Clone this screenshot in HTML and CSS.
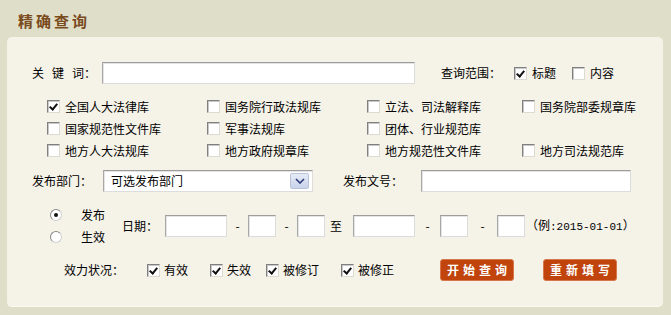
FILE: index.html
```html
<!DOCTYPE html>
<html lang="zh-CN">
<head>
    <meta charset="UTF-8">
    <title>精确查询</title>
    <link rel="stylesheet" href="styles.css">
</head>
<body>
    <h1 class="title">精确查询</h1>
    <div class="panel">
        <div class="row row-key">
            <span class="label key-label"><span class="sp">关</span><span class="sp">键</span>词：</span>
            <span class="field key-input"></span>
            <span class="range-label">查询范围：</span>
            <span class="box on"></span><span class="opt">标题</span>
            <span class="box gap-l"></span><span class="opt">内容</span>
        </div>

        <div class="libs">
            <div class="lib-row">
                <span class="lib"><span class="box on"></span>全国人大法律库</span>
                <span class="lib"><span class="box"></span>国务院行政法规库</span>
                <span class="lib lib-3"><span class="box"></span>立法、司法解释库</span>
                <span class="lib lib-4"><span class="box"></span>国务院部委规章库</span>
            </div>
            <div class="lib-row">
                <span class="lib"><span class="box"></span>国家规范性文件库</span>
                <span class="lib"><span class="box"></span>军事法规库</span>
                <span class="lib lib-3"><span class="box"></span>团体、行业规范库</span>
            </div>
            <div class="lib-row tall">
                <span class="lib"><span class="box"></span>地方人大法规库</span>
                <span class="lib"><span class="box"></span>地方政府规章库</span>
                <span class="lib lib-3"><span class="box"></span>地方规范性文件库</span>
                <span class="lib lib-4"><span class="box"></span>地方司法规范库</span>
            </div>
        </div>

        <div class="row row-dept">
            <span class="label dept-label">发布部门：</span>
            <span class="field select">
                <span class="select-text">可选发布部门</span>
                <span class="select-btn">
                    <svg width="10" height="6" viewBox="0 0 10 6"><polyline points="1,1 5,5 9,1" fill="none" stroke="#2b3b78" stroke-width="1.6"/></svg>
                </span>
            </span>
            <span class="label doc-label">发布文号：</span>
            <span class="field doc-input"></span>
        </div>

        <div class="row row-date">
            <div class="radios">
                <div class="radio-item"><span class="radio on"></span>发布</div>
                <div class="radio-item"><span class="radio"></span>生效</div>
            </div>
            <span class="date-label">日期：</span>
            <span class="field d-year"></span><span class="dash">-</span>
            <span class="field d-small"></span><span class="dash">-</span>
            <span class="field d-small"></span>
            <span class="to">至</span>
            <span class="field d-year"></span><span class="dash dash-w1">-</span>
            <span class="field d-small"></span><span class="dash dash-w2">-</span>
            <span class="field d-small"></span>
            <span class="hint">（例<span class="num">:2015-01-01</span>）</span>
        </div>

        <div class="row row-status">
            <span class="status-label">效力状况：</span>
            <span class="box on"></span><span class="st st-1">有效</span>
            <span class="box on"></span><span class="st st-2">失效</span>
            <span class="box on"></span><span class="st st-3">被修订</span>
            <span class="box on"></span><span class="st">被修正</span>
            <span class="btn btn-search">开始查询</span>
            <span class="btn btn-reset">重新填写</span>
        </div>
    </div>
</body>
</html>
```

FILE: styles.css
```css
body {
    margin: 0;
    padding: 0;
    background-color: #dfdec8;
    font-family: "Noto Sans CJK SC", "Liberation Sans", sans-serif;
    font-size: 12px;
    color: #000;
}

.title {
    margin: 0;
    height: 37px;
    box-sizing: border-box;
    padding: 12px 0 0 18px;
    font-size: 15px;
    line-height: 18px;
    font-weight: bold;
    letter-spacing: 3px;
    color: #7a4b1d;
}

.panel {
    margin: 0 8px 0 7px;
    height: 270px;
    box-sizing: border-box;
    padding-left: 25px;
    padding-top: 1px;
    background-color: #f5f2e8;
    border-radius: 5px;
    border-bottom: 1px solid #fbfaf4;
}

.row {
    display: flex;
    align-items: center;
    height: 22px;
    line-height: 16px;
    white-space: nowrap;
}

.row > * {
    flex: none;
}

.field {
    display: inline-block;
    height: 22px;
    box-sizing: border-box;
    background-color: #fff;
    border: 1px solid #dcdcdc;
    border-top-color: #9c9c9c;
    border-left-color: #a8a8a8;
    box-shadow: inset 1px 1px 0 #e4e4e4;
}

/* checkbox */
.box {
    display: inline-block;
    width: 13px;
    height: 13px;
    box-sizing: border-box;
    background-color: #fff;
    border: 1px solid #dcdad2;
    border-top-color: #808080;
    border-left-color: #808080;
    box-shadow: inset 1px 1px 0 #c8c8c8;
    position: relative;
    flex: none;
}

.box.on::after {
    content: "";
    position: absolute;
    left: 3px;
    top: 1px;
    width: 3px;
    height: 6px;
    border-right: 2px solid #111;
    border-bottom: 2px solid #111;
    transform: rotate(40deg);
}

/* row 1 */
.row-key {
    margin-top: 24px;
}

.key-label {
    width: 70px;
}

.sp {
    margin-right: 8px;
}

.key-input {
    width: 313px;
}

.range-label {
    margin-left: 26px;
    width: 73px;
}

.opt {
    margin-left: 5px;
}

.gap-l {
    margin-left: 16px;
}

/* libraries */
.libs {
    margin-top: 11px;
    padding-left: 15px;
}

.lib-row {
    display: flex;
    align-items: center;
    height: 22px;
    white-space: nowrap;
}

.lib-row.tall {
    height: 23px;
}

.lib {
    display: flex;
    align-items: center;
    gap: 5px;
    width: 160px;
    flex: none;
}

.lib-3 {
    width: 155px;
}

/* department */
.row-dept {
    margin-top: 8px;
}

.dept-label {
    width: 71px;
}

.select {
    width: 210px;
    display: flex;
    align-items: center;
    justify-content: space-between;
    padding: 0 3px 0 7px;
}

.select-btn {
    display: flex;
    align-items: center;
    justify-content: center;
    width: 19px;
    height: 16px;
    background: linear-gradient(#e6ebf6, #c8d3ea);
    border: 1px solid #b9c4dc;
    border-radius: 2px;
    box-sizing: border-box;
}

.doc-label {
    margin-left: 30px;
    width: 78px;
}

.doc-input {
    width: 210px;
}

/* dates */
.row-date {
    margin-top: 12px;
    height: 44px;
}

.radios {
    padding-left: 18px;
    width: 74px;
}

.radio-item {
    display: flex;
    align-items: center;
    height: 22px;
}

.radio {
    display: inline-block;
    width: 12px;
    height: 12px;
    box-sizing: border-box;
    border-radius: 50%;
    background-color: #fff;
    border: 1px solid #d0d0d0;
    border-top-color: #8a8a8a;
    border-left-color: #8a8a8a;
    margin-right: 19px;
    position: relative;
}

.radio.on::after {
    content: "";
    position: absolute;
    left: 3px;
    top: 3px;
    width: 4px;
    height: 4px;
    border-radius: 50%;
    background-color: #111;
}

.date-label {
    margin-left: -2px;
    width: 43px;
}

.d-year {
    width: 62px;
}

.d-small {
    width: 28px;
}

.dash {
    width: 21px;
    text-align: center;
}

.dash-w1 {
    width: 25px;
}

.dash-w2 {
    width: 29px;
}

.to {
    width: 28px;
    box-sizing: border-box;
    padding-left: 5px;
}

.hint {
    margin-left: 1px;
}

.num {
    font-family: "Liberation Mono", "DejaVu Sans Mono", monospace;
    font-size: 11px;
}

/* status */
.row-status {
    margin-top: 11px;
}

.status-label {
    margin-left: 32px;
    width: 83px;
}

.st {
    margin-left: 4px;
}

.st-1 {
    margin-right: 22px;
}

.st-2 {
    margin-right: 15px;
}

.st-3 {
    margin-right: 22px;
}

.btn {
    display: inline-flex;
    align-items: center;
    justify-content: center;
    height: 22px;
    width: 74px;
    box-sizing: border-box;
    background-color: #c0440c;
    border: 1px solid #d7764a;
    border-radius: 3px;
    color: #fff;
    font-weight: bold;
    font-size: 12px;
    letter-spacing: 4px;
    padding-left: 4px;
}

.btn-search {
    margin-left: 46px;
}

.btn-reset {
    margin-left: 29px;
}
```
